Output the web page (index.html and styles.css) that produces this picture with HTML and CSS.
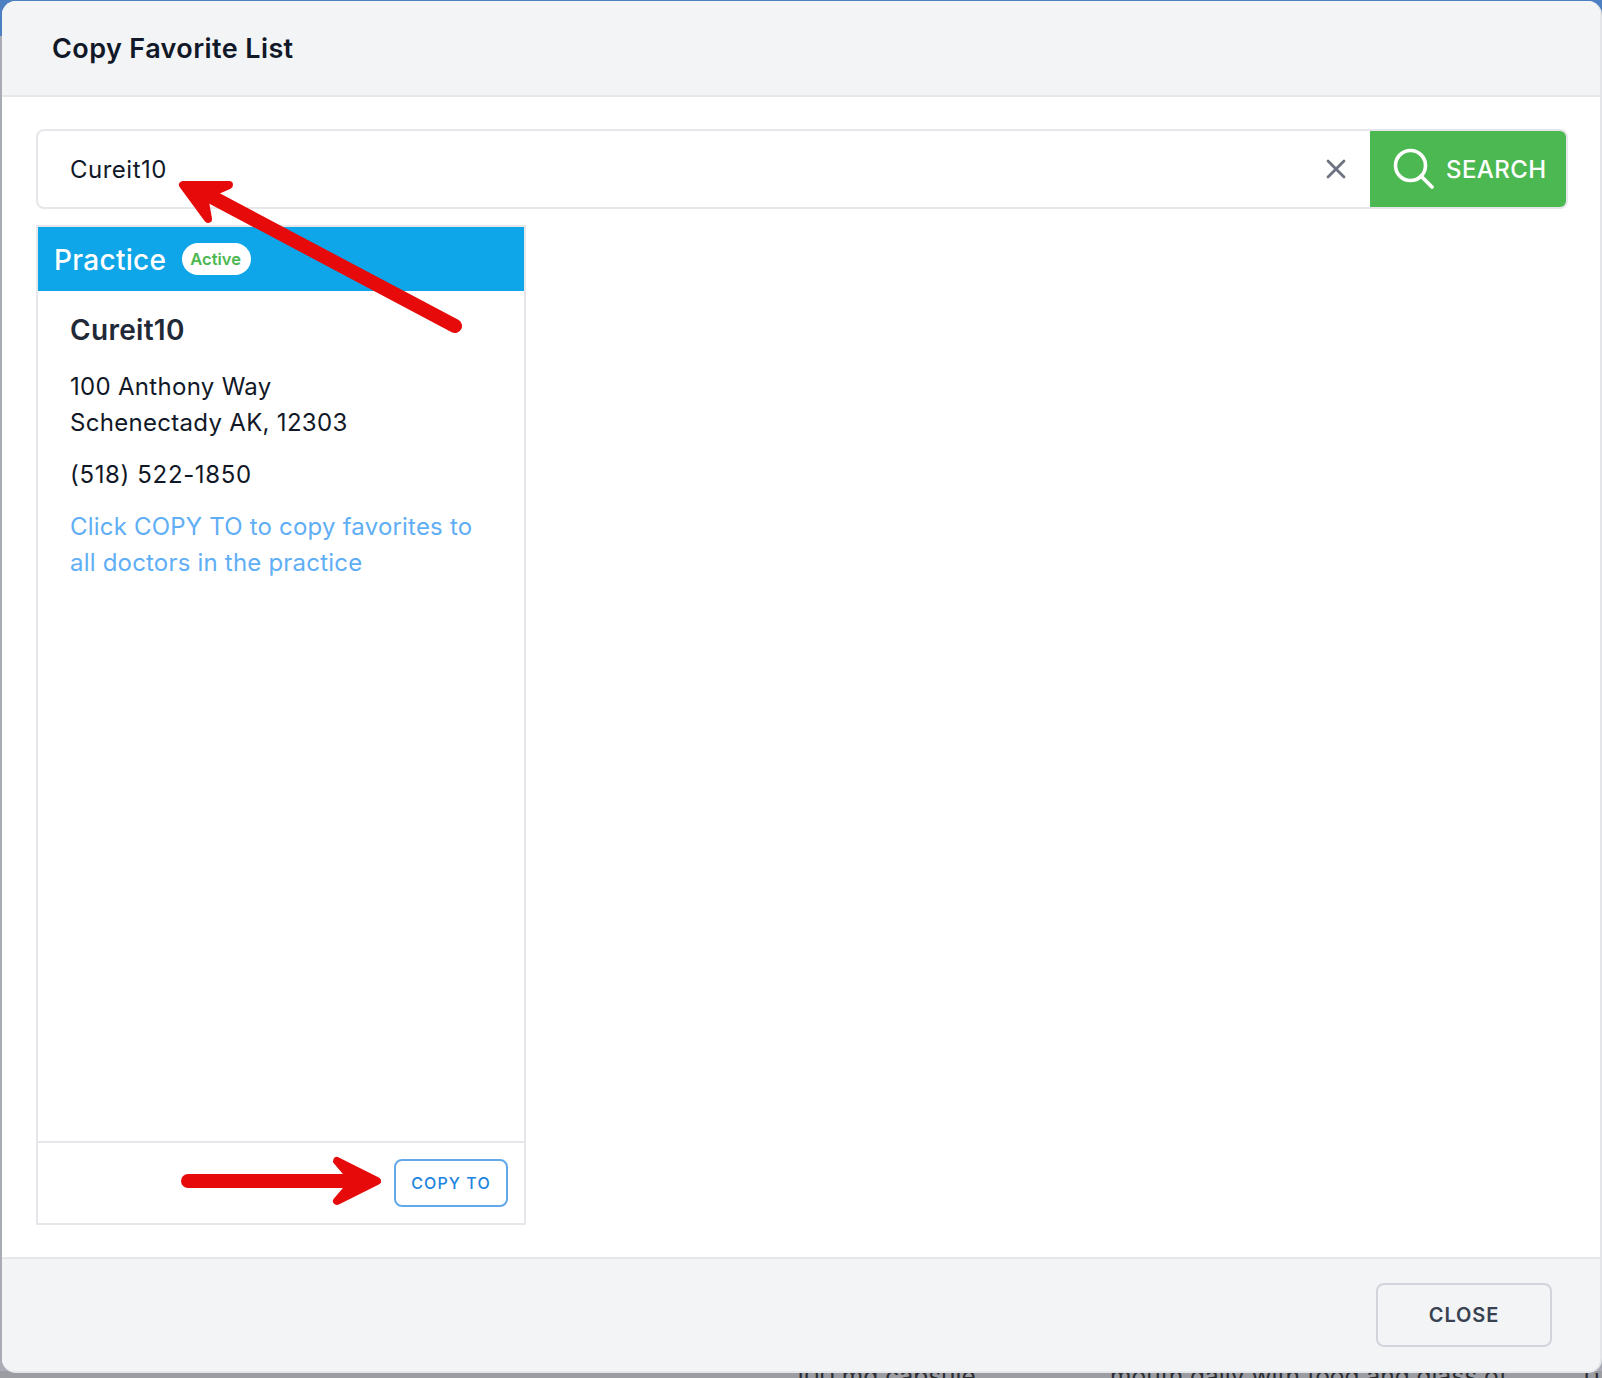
FILE: index.html
```html
<!DOCTYPE html>
<html lang="en">
<head>
<meta charset="utf-8">
<title>Copy Favorite List</title>
<link rel="stylesheet" href="styles.css">
</head>
<body>
<div class="modal">
  <header class="modal-header"><h1 class="modal-title">Copy Favorite List</h1></header>
  <main class="modal-body">
    <div class="search">
      <div class="search-field">
        <span class="search-value">Cureit10</span>
        <svg class="clear-icon" viewBox="0 0 20 20" width="20" height="20" aria-hidden="true"><path d="M2 2 18 18M18 2 2 18" fill="none" stroke="#6b7280" stroke-width="2.8" stroke-linecap="round"/></svg>
      </div>
      <button class="search-btn" type="button">
        <svg class="search-icon" viewBox="0 0 42 42" width="42" height="42" aria-hidden="true"><circle cx="17.5" cy="17.5" r="15" fill="none" stroke="#fff" stroke-width="3.6"/><path d="M28 28 39 39" stroke="#fff" stroke-width="3.8" stroke-linecap="round"/></svg>
        <span class="search-label">SEARCH</span>
      </button>
    </div>
    <section class="card">
      <div class="card-head"><span class="card-kind">Practice</span><span class="badge">Active</span></div>
      <div class="card-body">
        <h2 class="card-name">Cureit10</h2>
        <p class="card-text card-address">100 Anthony Way<br>Schenectady AK, 12303</p>
        <p class="card-text card-phone">(518) 522-1850</p>
        <p class="card-text card-hint">Click COPY TO to copy favorites to all doctors in the practice</p>
      </div>
      <div class="card-foot"><button class="copy-btn" type="button">COPY TO</button></div>
    </section>
  </main>
  <footer class="modal-footer"><button class="close-btn" type="button">CLOSE</button></footer>
</div>
<div class="behind">
  <span class="behind-a">100 mg capsule</span>
  <span class="behind-b">mouth daily with food and glass of</span>
  <span class="behind-c">0</span>
</div>
<svg class="arrows" viewBox="0 0 1602 1378" width="1602" height="1378" aria-hidden="true">
  <path class="arrow-shaft" d="M455 326 208 195"/>
  <path class="arrow-head" d="M183 185 229 185 204 196 208 219Z"/>
  <path class="arrow-shaft" d="M188 1181H358"/>
  <path class="arrow-head" d="M377 1181 337 1161 354 1181 337 1201Z"/>
</svg>
</body>
</html>
```
FILE: styles.css
```css
* { box-sizing: border-box; }
html, body { margin: 0; padding: 0; }
body {
  width: 1602px;
  height: 1378px;
  overflow: hidden;
  position: relative;
  padding: 1px 0 0 2px;
  background: linear-gradient(#4d80c2 0, #4d80c2 36px, #a9acb4 36px, #a9acb4 1371px, #9b9da2 1371px);
  font-family: Inter, "Liberation Sans", sans-serif;
  color: #111827;
}
.modal {
  width: 1600px;
  height: 1372px;
  display: flex;
  flex-direction: column;
  background: #fff;
  border-radius: 14px;
  overflow: hidden;
  border-bottom: 2px solid #e5e7eb;
  border-right: 2px solid #e3e5e9;
}
.modal-header {
  height: 96px;
  padding: 0 50px;
  display: flex;
  align-items: center;
  background: #f3f4f6;
  border-bottom: 2px solid #e5e7eb;
}
.modal-title { margin: 0; padding-top: 1px; font-size: 27px; font-weight: 600; letter-spacing: 0.4px; color: #111827; }
.modal-body { flex: 1; padding: 32px 32px 32px 34px; display: flex; flex-direction: column; gap: 16px; min-height: 0; }
.search {
  display: flex;
  height: 80px;
  border: 2px solid #e5e7eb;
  border-radius: 8px;
  overflow: hidden;
}
.search-field { flex: 1; display: flex; align-items: center; justify-content: space-between; padding: 0 24px 0 32px; }
.search-value { font-size: 24px; letter-spacing: 0.5px; color: #111827; padding-top: 2px; }
.clear-icon { display: block; }
.search-btn {
  width: 196px;
  border: 0;
  background: #4cb851;
  color: #fff;
  display: flex;
  align-items: center;
  gap: 11px;
  padding: 0 0 0 23px;
  font: 500 24px Inter, "Liberation Sans", sans-serif;
  letter-spacing: 0.4px;
}
.search-label { padding-top: 2px; }
.card {
  width: 490px;
  height: 1001px;
  border: 2px solid #e5e7eb;
  display: flex;
  flex-direction: column;
}
.card-head {
  height: 64px;
  background: #0ea5e9;
  display: flex;
  align-items: center;
  gap: 16px;
  padding: 0 16px;
}
.card-kind { font-size: 28px; font-weight: 500; letter-spacing: 0.3px; color: #fff; padding-top: 2px; }
.badge {
  background: #fff;
  color: #4cb851;
  font-size: 16.5px;
  font-weight: 600;
  padding: 0 10px 0 8px;
  height: 32px;
  line-height: 32px;
  border-radius: 16px;
}
.card-body { flex: 1; padding: 20px 32px 18px; }
.card-name { margin: 0 0 20px; font-size: 28px; font-weight: 600; letter-spacing: 0.3px; line-height: 38px; color: #1f2937; }
.card-text { margin: 0 0 16px; font-size: 24px; line-height: 36px; color: #111827; letter-spacing: 0.2px; }
.card-address { letter-spacing: 0.3px; }
.card-phone { letter-spacing: 0.65px; }
.card-hint { color: #60aef5; }
.card-foot {
  height: 82px;
  border-top: 2px solid #e5e7eb;
  display: flex;
  align-items: center;
  justify-content: flex-end;
  padding: 0 16px;
}
.copy-btn {
  width: 114px;
  height: 48px;
  background: #fff;
  border: 2px solid #63a9ea;
  border-radius: 8px;
  color: #1d83de;
  font: 500 16px Inter, "Liberation Sans", sans-serif;
  letter-spacing: 1.1px;
}
.modal-footer {
  flex: none;
  height: 114px;
  padding: 24px 48px 0 0;
  display: flex;
  justify-content: flex-end;
  align-items: flex-start;
  background: #f3f4f6;
  border-top: 2px solid #e5e7eb;
}
.close-btn {
  width: 176px;
  height: 64px;
  background: transparent;
  border: 2px solid #d1d5db;
  border-radius: 8px;
  color: #374151;
  font: 600 20px Inter, "Liberation Sans", sans-serif;
  letter-spacing: 0.9px;
}
.behind {
  height: 5px;
  overflow: hidden;
  display: flex;
  font-size: 24.5px;
  line-height: 28px;
  color: #2b2d33;
}
.behind span { display: block; margin-top: -11px; white-space: nowrap; }
.behind-a { margin-left: 792px; width: 316px; }
.behind-b { width: 474px; }
.arrows { position: absolute; left: 0; top: 0; pointer-events: none; }
.arrow-shaft { fill: none; stroke: #e60a0a; stroke-width: 14; stroke-linecap: round; }
.arrow-head { fill: #e60a0a; stroke: #e60a0a; stroke-width: 8; stroke-linejoin: round; }
```
